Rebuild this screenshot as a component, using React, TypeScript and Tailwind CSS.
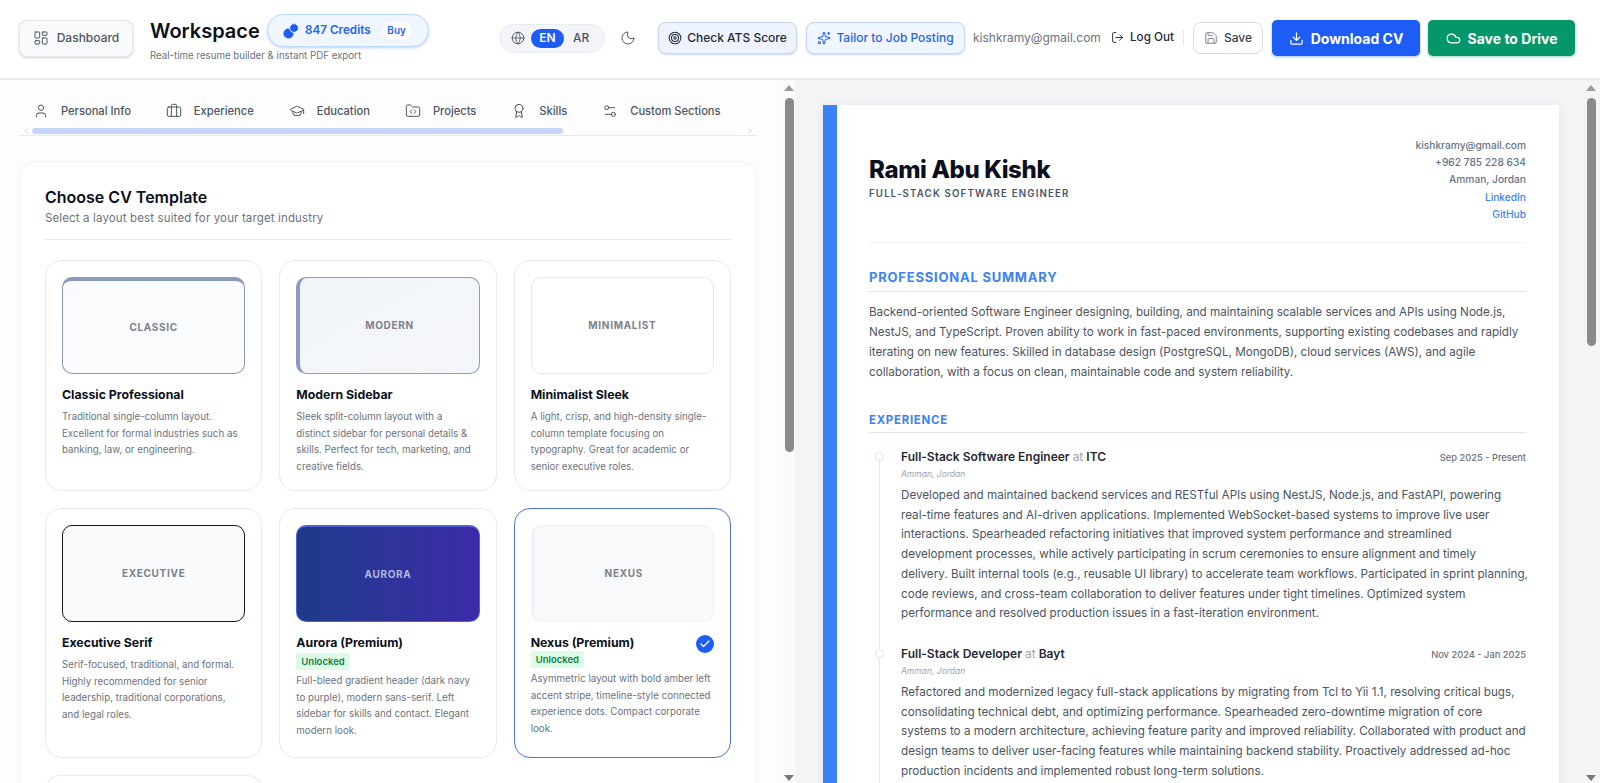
import {
  Award,
  Briefcase,
  Check,
  ChevronLeft,
  ChevronRight,
  Cloud,
  Download,
  FolderCode,
  Globe,
  GraduationCap,
  LayoutDashboard,
  LogOut,
  Moon,
  Save,
  Settings2,
  Sparkles,
  Target,
  User,
} from 'lucide-react';
import type { ReactNode } from 'react';

const tabs = [
  { label: 'Personal Info', icon: User },
  { label: 'Experience', icon: Briefcase },
  { label: 'Education', icon: GraduationCap },
  { label: 'Projects', icon: FolderCode },
  { label: 'Skills', icon: Award },
  { label: 'Custom Sections', icon: Settings2 },
];

const templates = [
  {
    name: 'Classic Professional',
    tag: 'CLASSIC',
    height: 'h-[231px]',
    thumb: 'border border-[#8c9bbd] border-t-4 bg-gradient-to-br from-[#f8fafc] to-[#fbfcfe] text-[#7b818c]',
    desc: 'Traditional single-column layout. Excellent for formal industries such as banking, law, or engineering.',
  },
  {
    name: 'Modern Sidebar',
    tag: 'MODERN',
    height: 'h-[231px]',
    thumb: 'border border-[#8c9bbd] border-l-4 bg-gradient-to-br from-[#f1f5f9] to-[#f4f6fa] text-[#7b818c]',
    desc: 'Sleek split-column layout with a\ndistinct sidebar for personal details & skills. Perfect for tech, marketing, and creative fields.',
  },
  {
    name: 'Minimalist Sleek',
    tag: 'MINIMALIST',
    height: 'h-[231px]',
    thumb: 'border border-[#e5e7eb] bg-white text-[#7b818c]',
    desc: 'A light, crisp, and high-density single-column template focusing on typography. Great for academic or senior executive roles.',
  },
  {
    name: 'Executive Serif',
    tag: 'EXECUTIVE',
    height: 'h-[250px]',
    thumb: 'border-[1.5px] border-[#111827] bg-[#f9fafb] text-[#7b818c]',
    desc: 'Serif-focused, traditional, and formal. Highly recommended for senior leadership, traditional corporations, and legal roles.',
  },
  {
    name: 'Aurora (Premium)',
    tag: 'AURORA',
    height: 'h-[250px]',
    premium: true,
    thumb: 'border border-[#4f5fd6] border-t-2 bg-gradient-to-r from-[#1e3a8a] to-[#3b2aa8] text-[#b0b8e0]',
    desc: 'Full-bleed gradient header (dark navy to purple), modern sans-serif. Left sidebar for skills and contact. Elegant modern look.',
  },
  {
    name: 'Nexus (Premium)',
    tag: 'NEXUS',
    height: 'h-[250px]',
    premium: true,
    selected: true,
    thumb: 'border border-[#f1f3f6] border-l-4 bg-[#f8f9fb] text-[#7b818c]',
    desc: 'Asymmetric layout with bold amber left accent stripe, timeline-style connected experience dots. Compact corporate look.',
  },
];

// line breaks follow the reference, Inter runs a bit narrower than the original font
const jobs = [
  {
    title: 'Full-Stack Software Engineer',
    company: 'ITC',
    dates: 'Sep 2025 - Present',
    text: 'Developed and maintained backend services and RESTful APIs using NestJS, Node.js, and FastAPI, powering\nreal-time features and AI-driven applications. Implemented WebSocket-based systems to improve live user\ninteractions. Spearheaded refactoring initiatives that improved system performance and streamlined\ndevelopment processes, while actively participating in scrum ceremonies to ensure alignment and timely\ndelivery. Built internal tools (e.g., reusable UI library) to accelerate team workflows. Participated in sprint planning,\ncode reviews, and cross-team collaboration to deliver features under tight timelines. Optimized system\nperformance and resolved production issues in a fast-iteration environment.',
  },
  {
    title: 'Full-Stack Developer',
    company: 'Bayt',
    dates: 'Nov 2024 - Jan 2025',
    text: 'Refactored and modernized legacy full-stack applications by migrating from Tcl to Yii 1.1, resolving critical bugs, consolidating technical debt, and optimizing performance. Spearheaded zero-downtime migration of core\nsystems to a modern architecture, achieving feature parity and improved reliability. Collaborated with product and design teams to deliver user-facing features while maintaining backend stability. Proactively addressed ad-hoc production incidents and implemented robust long-term solutions.',
  },
];

const Scrollbar = ({ thumb, outer }: { thumb: string; outer: string }) => (
  <div className={`shrink-0 flex flex-col items-center pt-[5px] ${outer}`}>
    <div className="w-0 h-0 border-l-[5px] border-r-[5px] border-b-[6px] border-l-transparent border-r-transparent border-b-[#9a9a9a]" />
    <div className={`w-[9px] mt-[7px] rounded-full bg-[#8a8a8a] ${thumb}`} />
    <div className="flex-1" />
    <div className="w-0 h-0 mb-[2px] border-l-[5px] border-r-[5px] border-t-[6px] border-l-transparent border-r-transparent border-t-[#777]" />
  </div>
);

const SectionHeading = ({ children, size }: { children: ReactNode; size: string }) => (
  <h2 className={`font-bold tracking-[0.06em] text-[#3b82f6] border-b border-[#e2e5ee] ${size}`}>{children}</h2>
);

export default function App() {
  return (
    <div className="h-screen flex flex-col overflow-hidden bg-white text-[#111827] font-['Inter',sans-serif]">
      <header className="h-[80px] shrink-0 flex items-center pl-[19px] pr-[25px] pb-[2px] border-b-2 border-[#e9eaec] bg-white">
        <button className="w-[114px] h-[37px] shrink-0 flex items-center justify-center gap-[8px] rounded-[8px] border border-[#e5e7eb] bg-[#f9fafb] shadow-[0_1px_3px_rgba(0,0,0,0.18)] text-[12px] font-medium text-[#4b5563]">
          <LayoutDashboard className="w-[16px] h-[16px]" strokeWidth={1.5} />
          Dashboard
        </button>
        <div className="ml-[17px] w-[280px] shrink-0">
          <div className="flex items-center h-[33px] mt-[2px]">
            <span className="text-[20px] font-semibold text-[#0b1020] w-[117px]">Workspace</span>
            <div className="w-[162px] h-[33px] flex items-center pl-[15px] rounded-full border border-[#bfdbfe] bg-[#eff6ff] shadow-[0_1px_3px_rgba(59,130,246,0.35)]">
              <svg width="16" height="16" viewBox="0 0 16 16" className="shrink-0">
                <circle cx="5.5" cy="10.5" r="5" fill="#1d5cf5" />
                <circle cx="11" cy="5" r="4.4" fill="#1d5cf5" stroke="#eff6ff" strokeWidth="1" />
              </svg>
              <span className="ml-[6px] text-[11.7px] font-semibold text-[#2563eb]">847 Credits</span>
              <span className="ml-[11px] w-[30px] h-[18px] flex items-center justify-center rounded-full bg-white text-[10px] font-semibold text-[#2563eb]">
                Buy
              </span>
            </div>
          </div>
          <p className="mt-[2px] text-[9.7px] text-[#6b7280]">Real-time resume builder &amp; instant PDF export</p>
        </div>
        <div className="ml-[69px] w-[106px] h-[29px] shrink-0 flex items-center pl-[11px] rounded-full border border-[#e8ebf0] bg-[#f3f5f8]">
          <Globe className="w-[14px] h-[14px] text-[#4b5563]" strokeWidth={1.5} />
          <span className="ml-[6px] w-[33px] h-[19px] flex items-center justify-center rounded-full bg-[#1d5cf5] text-[12px] font-semibold text-white">EN</span>
          <span className="ml-[9px] text-[12px] font-medium text-[#4b5563]">AR</span>
        </div>
        <Moon className="ml-[15px] w-[16px] h-[16px] shrink-0 text-[#4b5563]" strokeWidth={1.5} />
        <button className="ml-[22px] w-[139px] h-[32px] shrink-0 flex items-center justify-center gap-[5px] rounded-[8px] border border-[#c7d7fb] bg-[#eff3ff] shadow-[0_1px_2px_rgba(59,130,246,0.3)] text-[12px] font-medium text-[#1f2937]">
          <Target className="w-[14px] h-[14px]" strokeWidth={1.75} />
          Check ATS Score
        </button>
        <button className="ml-[9px] w-[159px] h-[32px] shrink-0 flex items-center justify-center gap-[5px] rounded-[8px] border border-[#c7d7fb] bg-[#eff6ff] shadow-[0_1px_2px_rgba(59,130,246,0.3)] text-[12px] font-medium text-[#2563eb]">
          <Sparkles className="w-[14px] h-[14px]" strokeWidth={1.75} />
          Tailor to Job Posting
        </button>
        <span className="ml-[8px] w-[130px] shrink-0 text-[12px] text-[#6b7280]">kishkramy@gmail.com</span>
        <span className="ml-[8px] flex items-center gap-[6px] shrink-0 text-[11.7px] font-medium text-[#1f2937]">
          <LogOut className="w-[13px] h-[13px]" strokeWidth={1.75} />
          Log Out
        </span>
        <div className="ml-[9px] w-px h-[16px] shrink-0 bg-[#e5e7eb]" />
        <button className="ml-[9px] w-[70px] h-[32px] shrink-0 flex items-center justify-center gap-[6px] rounded-[8px] border border-[#d9dce1] bg-white text-[12px] font-medium text-[#374151]">
          <Save className="w-[14px] h-[14px] text-[#6b7280]" strokeWidth={1.5} />
          Save
        </button>
        <button className="ml-[9px] w-[148px] h-[36px] shrink-0 flex items-center justify-center gap-[7px] rounded-[5px] bg-[#1d5cf5] shadow-[0_1px_3px_rgba(29,92,245,0.4)] text-[14px] font-bold text-white">
          <Download className="w-[15px] h-[15px]" strokeWidth={2} />
          Download CV
        </button>
        <button className="ml-[8px] w-[147px] h-[36px] shrink-0 flex items-center justify-center gap-[7px] rounded-[5px] bg-[#059669] shadow-[0_1px_3px_rgba(5,150,105,0.4)] text-[14px] font-bold text-white">
          <Cloud className="w-[15px] h-[15px]" strokeWidth={2} />
          Save to Drive
        </button>
      </header>

      <main className="flex-1 min-h-0 flex">
        <section className="w-[783px] shrink-0 overflow-hidden bg-[#fdfdfd] pl-[19px] pr-[26px] pt-[15px]">
          <div className="h-[41px] border-b border-[#e8eaee]">
            <div className="flex h-[33px] items-center pl-[14px]">
              {tabs.map(({ label, icon: Icon }) => (
                <div key={label} className="flex items-center gap-[12px] mr-[35px] shrink-0 text-[11.15px] font-medium text-[#4b5563]">
                  <Icon className="w-[16px] h-[16px]" strokeWidth={1.5} />
                  {label}
                </div>
              ))}
            </div>
            <div className="flex items-center h-[6px] pl-[3px] pr-[3px]">
              <ChevronLeft className="w-[8px] h-[8px] text-[#c7d7fb]" strokeWidth={3} />
              <div className="h-[6px] ml-[2px] w-[531px] rounded-full bg-[#c7d7fb]" />
              <div className="flex-1" />
              <ChevronRight className="w-[8px] h-[8px] text-[#c7d7fb]" strokeWidth={3} />
            </div>
          </div>

          <div className="mt-[25px] rounded-t-[16px] border border-b-0 border-[#f1f2f4] bg-white px-[25px] pt-[25px]">
            <h1 className="text-[16px] leading-[20px] font-semibold text-[#0b1020]">Choose CV Template</h1>
            <p className="mt-[3px] text-[11.5px] leading-[16px] tracking-[0.012em] text-[#6b7280]">Select a layout best suited for your target industry</p>
            <div className="mt-[13px] h-px bg-[#e5e7eb]" />
            <div className="mt-[20px] grid grid-cols-3 gap-[17px]">
              {templates.map((t) => (
                <div
                  key={t.name}
                  className={`${t.height} overflow-hidden rounded-[16px] bg-white p-[16px] ${
                    t.selected ? 'border border-[#4f74e8]' : 'border border-[#e9eaec]'
                  }`}
                >
                  <div className={`h-[97px] rounded-[10px] flex items-center justify-center text-[10px] font-bold tracking-[0.07em] ${t.thumb}`}>
                    {t.tag}
                  </div>
                  <div className="mt-[13px] flex items-start justify-between">
                    <h3 className="text-[12.3px] leading-[16px] font-bold text-[#0b1020]">{t.name}</h3>
                    {t.selected && (
                      <span className="w-[18px] h-[18px] flex items-center justify-center rounded-full bg-[#1d5cf5]">
                        <Check className="w-[12px] h-[12px] text-white" strokeWidth={2.5} />
                      </span>
                    )}
                  </div>
                  {t.premium && (
                    <span className={`block w-fit h-[17px] px-[5px] rounded-[3px] bg-[#dcfce7] text-[9.5px] leading-[17px] font-semibold text-[#15803d] ${t.selected ? 'mt-[-2px]' : 'mt-[2px]'}`}>
                      Unlocked
                    </span>
                  )}
                  <p className={`whitespace-pre-line text-[9.75px] leading-[16.5px] text-[#6b7280] ${t.premium ? 'mt-[3px]' : 'mt-[6px]'}`}>{t.desc}</p>
                </div>
              ))}
            </div>
            <div className="mt-[17px] w-[218px] h-[40px] rounded-t-[16px] border border-b-0 border-[#e9eaec]" />
          </div>
        </section>
        <Scrollbar thumb="h-[354px]" outer="w-[12px] bg-[#fafafa]" />

        <section className="flex-1 min-w-0 overflow-hidden bg-[#f3f4f6] pl-[28px] pr-[26px] pt-[25px]">
          <div className="flex h-[800px] bg-white shadow-[0_2px_10px_rgba(0,0,0,0.08)]">
            <div className="w-[14px] shrink-0 bg-[#3b82f6]" />
            <div className="flex-1 min-w-0 pl-[32px] pr-[33px] pt-[32px]">
              <div className="flex justify-between pb-[19px] border-b border-[#f3f4f6]">
                <div className="pt-[17px]">
                  <div className="text-[24px] leading-[32px] font-extrabold tracking-[-0.015em] text-[#0b1020]">Rami Abu Kishk</div>
                  <div className="mt-[1px] text-[9.7px] leading-[14px] font-semibold tracking-[0.12em] text-[#475569]">FULL-STACK SOFTWARE ENGINEER</div>
                </div>
                <div className="text-right text-[10.2px] leading-[17.2px] font-medium text-[#64748b]">
                  <div>kishkramy@gmail.com</div>
                  <div>+962 785 228 634</div>
                  <div>Amman, Jordan</div>
                  <div className="text-[#3b82f6]">LinkedIn</div>
                  <div className="text-[#3b82f6]">GitHub</div>
                </div>
              </div>

              <div className="mt-[25px]">
                <SectionHeading size="text-[13px] leading-[18px] pb-[5px]">PROFESSIONAL SUMMARY</SectionHeading>
                <p className="mt-[10px] text-[11.65px] leading-[20px] text-[#4b5563]">
                  Backend-oriented Software Engineer designing, building, and maintaining scalable services and APIs using Node.js, NestJS, and TypeScript. Proven ability to work in fast-paced environments, supporting existing codebases and rapidly iterating on new features. Skilled in database design (PostgreSQL, MongoDB), cloud services (AWS), and agile collaboration, with a focus on clean, maintainable code and system reliability.
                </p>
              </div>

              <div className="mt-[30px]">
                <SectionHeading size="text-[11.5px] leading-[16px] pb-[4px]">EXPERIENCE</SectionHeading>
                <div className="mt-[15px] flex flex-col gap-[21px]">
                  {jobs.map((job) => (
                    <div key={job.title} className="relative pl-[32px]">
                      <div className="absolute left-[10px] top-[9px] bottom-[-29px] w-px bg-[#e5e7eb]" />
                      <div className="absolute left-[6px] top-[4px] w-[9px] h-[9px] rounded-full border border-[#dbe3ee] bg-white" />
                      <div className="flex items-baseline justify-between">
                        <div className="text-[12px] leading-[18px] font-semibold text-[#1f2937]">
                          {job.title} <span className="font-normal text-[#9ca3af]">at</span> {job.company}
                        </div>
                        <div className="text-[9.3px] font-medium text-[#6b7280]">{job.dates}</div>
                      </div>
                      <div className="text-[8.5px] leading-[17px] italic text-[#9ca3af]">Amman, Jordan</div>
                      <p className="mt-[3px] mr-[-6px] whitespace-pre-line text-[11.65px] leading-[19.7px] text-[#4b5563]">{job.text}</p>
                    </div>
                  ))}
                </div>
              </div>
            </div>
          </div>
        </section>
        <Scrollbar thumb="h-[248px]" outer="w-[15px] pr-[3px] bg-[#f3f4f6]" />
      </main>
    </div>
  );
}
